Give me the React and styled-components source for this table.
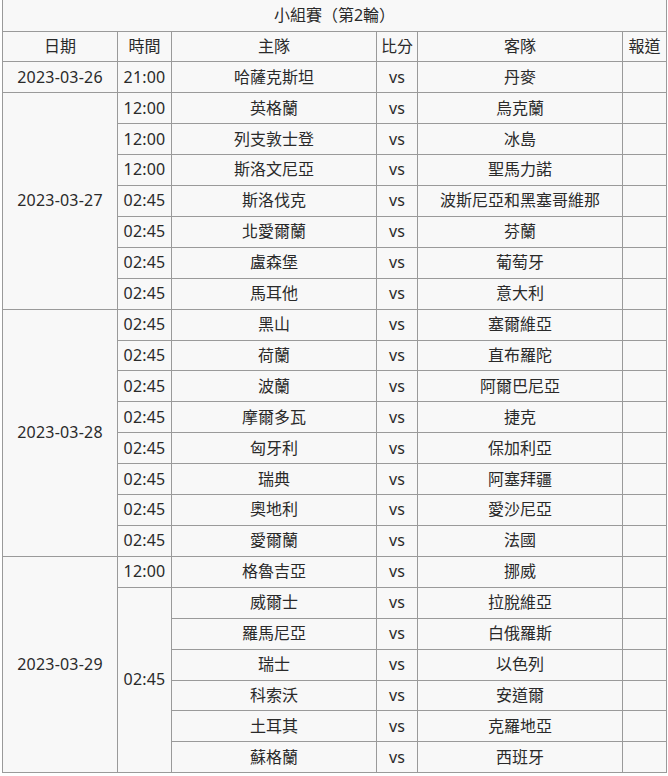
import React from "react";
import styled, { createGlobalStyle } from "styled-components";

const GlobalStyle = createGlobalStyle`
  html, body {
    margin: 0;
    padding: 0;
    background: #ffffff;
  }
  body {
    font-family: "Noto Sans", "Noto Sans CJK TC", sans-serif;
  }
`;

const Page = styled.div`
  padding: 0 0 0 2px;
`;

const Table = styled.table`
  border-collapse: collapse;
  table-layout: fixed;
  width: 665px;
  background: #f8f8f8;
  color: #2a2a2a;
  font-size: 16px;
  line-height: 1.2;
`;

const Col = styled.col`
  width: ${(props) => props.$w}px;
`;

const TitleRow = styled.tr`
  height: 31px;
`;

const Row = styled.tr`
  height: 30.92px;
`;

const TitleCell = styled.th`
  font-weight: normal;
  text-align: center;
  vertical-align: middle;
  padding: 0;
  border: 1px solid #9a9a9a;
  border-top: none;
`;

const HeadCell = styled.th`
  font-weight: normal;
  text-align: center;
  vertical-align: middle;
  padding: 0 2px;
  border: 1px solid #9a9a9a;
  white-space: nowrap;
`;

const Cell = styled.td`
  text-align: center;
  vertical-align: middle;
  padding: 0 2px;
  border: 1px solid #9a9a9a;
  white-space: nowrap;
  letter-spacing: ${(props) => (props.$num ? "0.2px" : "0")};
`;

const groups = [
  {
    date: "2023-03-26",
    slots: [{ time: "21:00", games: [["哈薩克斯坦", "丹麥"]] }],
  },
  {
    date: "2023-03-27",
    slots: [
      { time: "12:00", games: [["英格蘭", "烏克蘭"]] },
      { time: "12:00", games: [["列支敦士登", "冰島"]] },
      { time: "12:00", games: [["斯洛文尼亞", "聖馬力諾"]] },
      { time: "02:45", games: [["斯洛伐克", "波斯尼亞和黑塞哥維那"]] },
      { time: "02:45", games: [["北愛爾蘭", "芬蘭"]] },
      { time: "02:45", games: [["盧森堡", "葡萄牙"]] },
      { time: "02:45", games: [["馬耳他", "意大利"]] },
    ],
  },
  {
    date: "2023-03-28",
    slots: [
      { time: "02:45", games: [["黑山", "塞爾維亞"]] },
      { time: "02:45", games: [["荷蘭", "直布羅陀"]] },
      { time: "02:45", games: [["波蘭", "阿爾巴尼亞"]] },
      { time: "02:45", games: [["摩爾多瓦", "捷克"]] },
      { time: "02:45", games: [["匈牙利", "保加利亞"]] },
      { time: "02:45", games: [["瑞典", "阿塞拜疆"]] },
      { time: "02:45", games: [["奧地利", "愛沙尼亞"]] },
      { time: "02:45", games: [["愛爾蘭", "法國"]] },
    ],
  },
  {
    date: "2023-03-29",
    slots: [
      { time: "12:00", games: [["格魯吉亞", "挪威"]] },
      {
        time: "02:45",
        games: [
          ["威爾士", "拉脫維亞"],
          ["羅馬尼亞", "白俄羅斯"],
          ["瑞士", "以色列"],
          ["科索沃", "安道爾"],
          ["土耳其", "克羅地亞"],
          ["蘇格蘭", "西班牙"],
        ],
      },
    ],
  },
];

const buildRows = () => {
  const rows = [];
  groups.forEach((group) => {
    const dateSpan = group.slots.reduce((n, s) => n + s.games.length, 0);
    group.slots.forEach((slot, si) => {
      slot.games.forEach(([home, away], gi) => {
        rows.push(
          <Row key={`${group.date}-${si}-${gi}`}>
            {si === 0 && gi === 0 && (
              <Cell rowSpan={dateSpan} $num>
                {group.date}
              </Cell>
            )}
            {gi === 0 && (
              <Cell rowSpan={slot.games.length} $num>
                {slot.time}
              </Cell>
            )}
            <Cell>{home}</Cell>
            <Cell>vs</Cell>
            <Cell>{away}</Cell>
            <Cell />
          </Row>
        );
      });
    });
  });
  return rows;
};

const App = () => {
  return (
    <Page>
      <GlobalStyle />
      <Table>
        <colgroup>
          <Col $w={115} />
          <Col $w={54} />
          <Col $w={205} />
          <Col $w={41} />
          <Col $w={205} />
          <Col $w={44} />
        </colgroup>
        <thead>
          <TitleRow>
            <TitleCell colSpan={6}>小組賽（第2輪）</TitleCell>
          </TitleRow>
          <Row>
            <HeadCell>日期</HeadCell>
            <HeadCell>時間</HeadCell>
            <HeadCell>主隊</HeadCell>
            <HeadCell>比分</HeadCell>
            <HeadCell>客隊</HeadCell>
            <HeadCell>報道</HeadCell>
          </Row>
        </thead>
        <tbody>{buildRows()}</tbody>
      </Table>
    </Page>
  );
};

export default App;
